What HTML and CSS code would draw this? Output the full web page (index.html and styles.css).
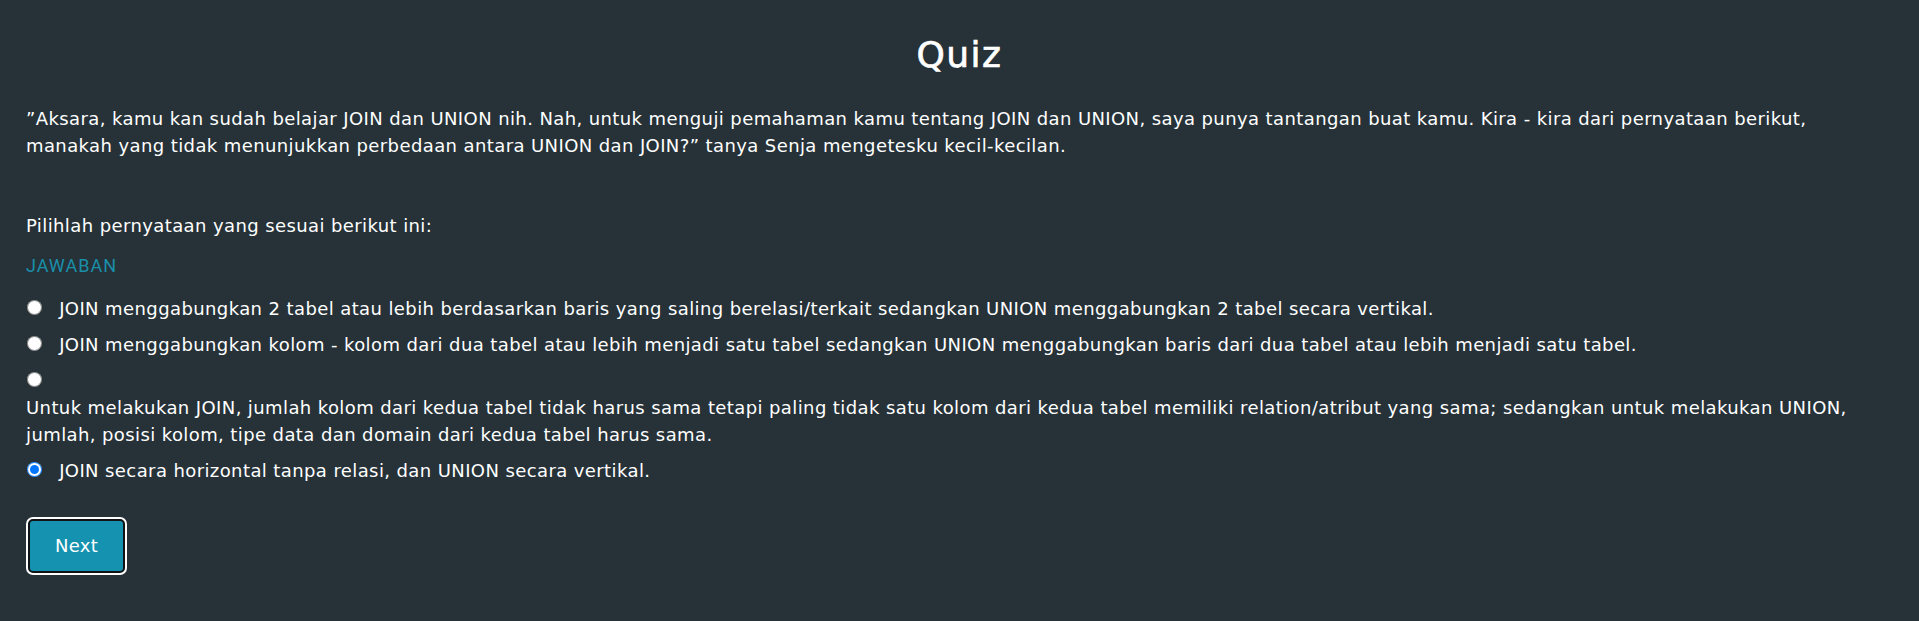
FILE: index.html
```html
<!DOCTYPE html>
<html lang="id">
<head>
<meta charset="utf-8">
<title>Quiz</title>
<link rel="stylesheet" href="styles.css">
</head>
<body>
<main class="quiz">
  <h1 class="quiz-title">Quiz</h1>
  <p class="intro">”Aksara, kamu kan sudah belajar JOIN dan UNION nih. Nah, untuk menguji pemahaman kamu tentang JOIN dan UNION, saya punya tantangan buat kamu. Kira - kira dari pernyataan berikut, manakah yang tidak menunjukkan perbedaan antara UNION dan JOIN?” tanya Senja mengetesku kecil-kecilan.</p>
  <p class="prompt">Pilihlah pernyataan yang sesuai berikut ini:</p>
  <div class="answer-label">JAWABAN</div>
  <form class="options">
    <div class="option">
      <input type="radio" name="jawaban" id="opt1">
      <label for="opt1">JOIN menggabungkan 2 tabel atau lebih berdasarkan baris yang saling berelasi/terkait sedangkan UNION menggabungkan 2 tabel secara vertikal.</label>
    </div>
    <div class="option">
      <input type="radio" name="jawaban" id="opt2">
      <label for="opt2">JOIN menggabungkan kolom - kolom dari dua tabel atau lebih menjadi satu tabel sedangkan UNION menggabungkan baris dari dua tabel atau lebih menjadi satu tabel.</label>
    </div>
    <div class="option">
      <input type="radio" name="jawaban" id="opt3">
      <label for="opt3">Untuk melakukan JOIN, jumlah kolom dari kedua tabel tidak harus sama tetapi paling tidak satu kolom dari kedua tabel memiliki relation/atribut yang sama; sedangkan untuk melakukan UNION, jumlah, posisi kolom, tipe data dan domain dari kedua tabel harus sama.</label>
    </div>
    <div class="option">
      <input type="radio" name="jawaban" id="opt4" checked>
      <label for="opt4">JOIN secara horizontal tanpa relasi, dan UNION secara vertikal.</label>
    </div>
  </form>
  <button class="next-btn" type="button">Next</button>
</main>
</body>
</html>
```

FILE: styles.css
```css
* {
  box-sizing: border-box;
}

html,
body {
  margin: 0;
  padding: 0;
}

body {
  background: #263238;
  color: #ffffff;
  font-family: "DejaVu Sans", "Open Sans", sans-serif;
  font-size: 18px;
  line-height: 27px;
  letter-spacing: 0.4px;
}

.quiz {
  padding: 0 26px 40px;
}

.quiz-title {
  margin: 33px 0 29px;
  text-align: center;
  font-size: 36px;
  line-height: 43px;
  font-weight: 400;
  letter-spacing: 1.5px;
  -webkit-text-stroke: 0.7px #ffffff;
}

.intro {
  margin: 0 0 53px;
  max-width: 1829px;
}

.prompt {
  margin: 0 0 12.5px;
}

.answer-label {
  font-family: Roboto, "Liberation Sans", sans-serif;
  color: #1a8fa9;
  letter-spacing: 1px;
  margin: 0 0 16px;
}

.options {
  max-width: 1854px;
  margin: 0;
  display: flex;
  flex-direction: column;
  gap: 9px;
}

.option input {
  width: 15px;
  height: 15px;
  margin: 0 11px 2px 1px;
  vertical-align: baseline;
}

.option label {
  display: inline-block;
}

.next-btn {
  display: block;
  margin: 35px 0 0 2px;
  width: 97px;
  height: 54px;
  padding: 0;
  background: #1592b0;
  color: #ffffff;
  border: 2px solid #111417;
  border-radius: 5px;
  box-shadow: 0 0 0 2px #ffffff;
  font-family: "DejaVu Sans", "Open Sans", sans-serif;
  font-size: 18px;
  letter-spacing: 0.3px;
  cursor: pointer;
}
```
